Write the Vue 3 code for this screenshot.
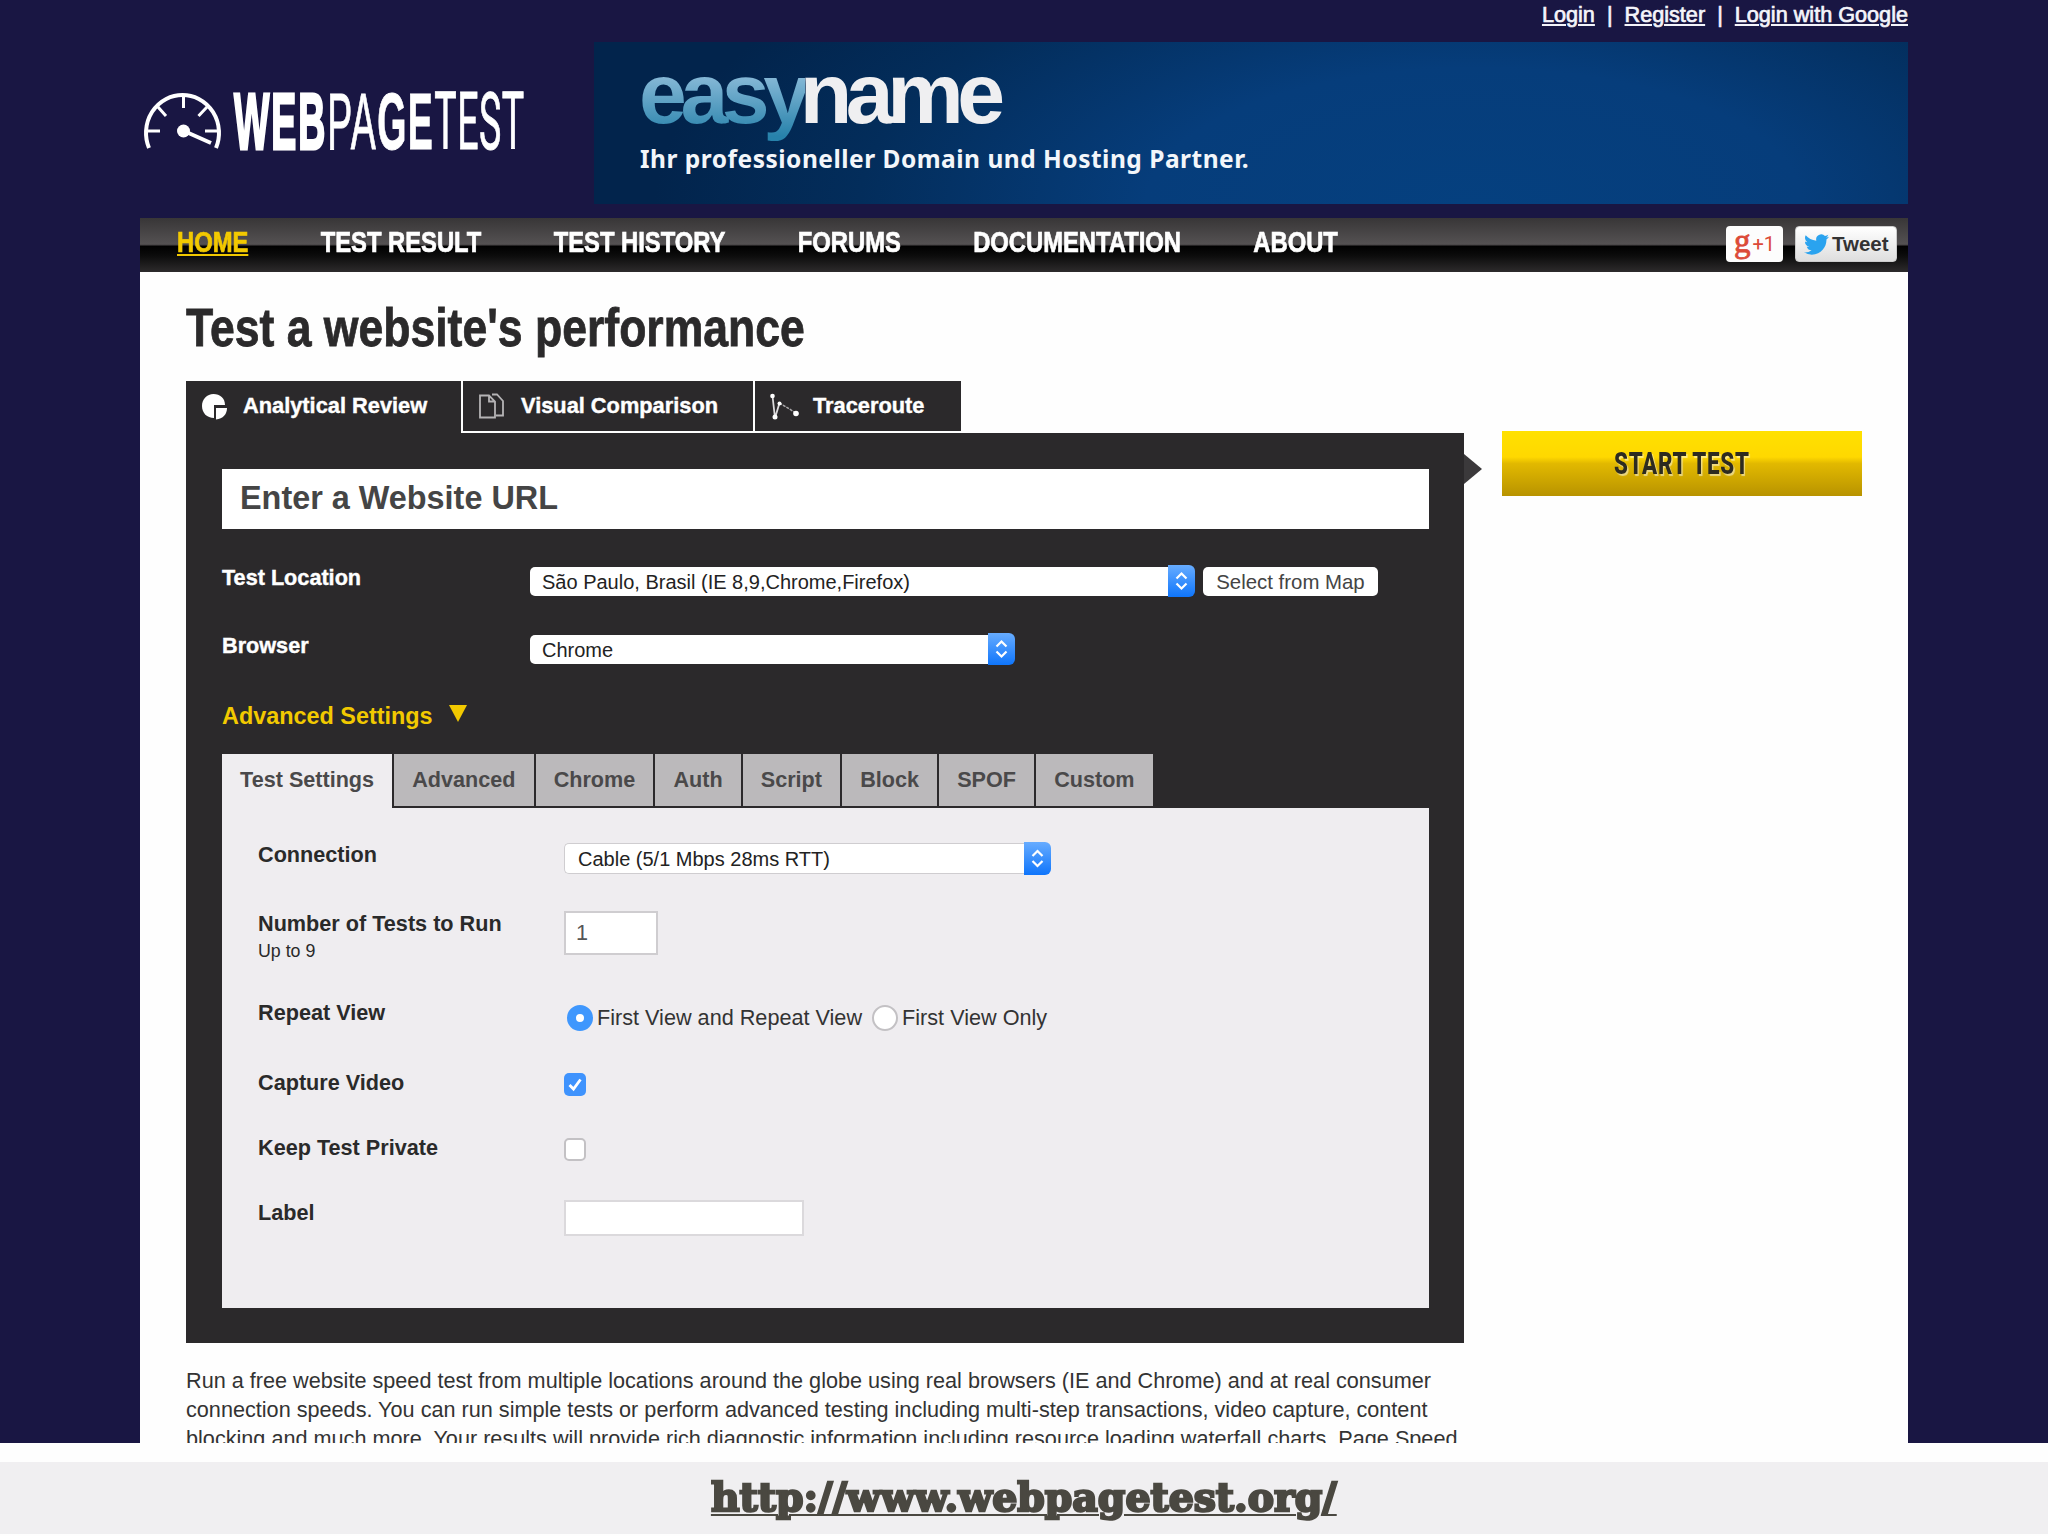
<script setup>
import { ref } from "vue";

const navItems = ["HOME", "TEST RESULT", "TEST HISTORY", "FORUMS", "DOCUMENTATION", "ABOUT"];
const settingsTabs = ["Test Settings", "Advanced", "Chrome", "Auth", "Script", "Block", "SPOF", "Custom"];
const currentNav = ref("HOME");
const currentTab = ref("Test Settings");
</script>

<template>
    <div class="page">
        <svg class="sprite" width="0" height="0">
            <symbol id="chevrons" viewBox="0 0 27 32">
                <path d="M8.5 13.5 L13.5 8.5 L18.5 13.5 M8.5 18.5 L13.5 23.5 L18.5 18.5" fill="none" stroke="#fff" stroke-width="2.2" />
            </symbol>
        </svg>

        <div class="site">
            <div class="user-links">
                <a>Login</a><span>|</span><a>Register</a><span>|</span><a>Login with Google</a>
            </div>

            <div class="header">
                <div class="logo">
                    <svg width="94" height="162" viewBox="140 42 94 162">
                        <g fill="none" stroke="#fff" stroke-width="4">
                            <path d="M149 148 A36.5 38 0 1 1 216 148" />
                            <path d="M183.500 95 V108 M158 107 L166 116 M207 107 L198.500 116 M147 131 H160 M205 131 H218" stroke-width="3" />
                            <path d="M184 131 L211 143" />
                        </g>
                        <circle cx="183.500" cy="131" r="6.500" fill="#fff" />
                    </svg>
                    <div class="logo-text"><b class="web">WEB</b><span>PA</span><b>GE</b><span class="thin">TEST</span></div>
                </div>
                <div class="banner">
                    <div class="brand"><span class="easy">easy</span><span class="name">name</span></div>
                    <p class="tagline">Ihr professioneller Domain und Hosting Partner.</p>
                </div>
            </div>

            <div class="nav">
                <ul>
                    <li v-for="item in navItems" :key="item" :class="{ current: item === currentNav }" @click="currentNav = item">{{ item }}</li>
                </ul>
                <div class="social">
                    <div class="plus-one"><span class="g">g</span><span>+1</span></div>
                    <div class="tweet">
                        <svg width="25" height="25" viewBox="0 0 24 24">
                            <path fill="#2aa3ef" d="M23.953 4.57a10 10 0 01-2.825.775 4.958 4.958 0 002.163-2.723c-.951.555-2.005.959-3.127 1.184a4.92 4.92 0 00-8.384 4.482C7.69 8.095 4.067 6.13 1.64 3.162a4.822 4.822 0 00-.666 2.475c0 1.71.87 3.213 2.188 4.096a4.904 4.904 0 01-2.228-.616v.06a4.923 4.923 0 003.946 4.827 4.996 4.996 0 01-2.212.085 4.936 4.936 0 004.604 3.417 9.867 9.867 0 01-6.102 2.105c-.39 0-.779-.023-1.17-.067a13.995 13.995 0 007.557 2.209c9.053 0 13.998-7.496 13.998-13.985 0-.21 0-.42-.015-.63A9.935 9.935 0 0024 4.59z" />
                        </svg>
                        <span>Tweet</span>
                    </div>
                </div>
            </div>

            <div class="content">
                <h1>Test a website's performance</h1>
                <div class="columns">
                    <div class="left">
                        <div class="test-tabs">
                            <div class="test-tab active">
                                <svg width="28" height="28" viewBox="0 0 28 28">
                                    <path d="M13 14 V25 C6 25 1 20 1 13 C1 6 6 1 12.500 1 C19 1 24 5 24 12 L13 12 Z" fill="#fff" />
                                    <path d="M15 15 H26 C26 21 22 26 15 26.500 Z" fill="#fff" />
                                </svg>
                                <span>Analytical Review</span>
                            </div>
                            <div class="test-tab compare">
                                <svg width="28" height="28" viewBox="0 0 28 28" fill="none" stroke="#b5b3b5" stroke-width="1.8">
                                    <path d="M2 2.500 H11 L17 8.500 V24.500 H2 Z M11 2.500 V8.500 H17" />
                                    <path d="M14 1.500 H19 L25 8 V22.500 H18" />
                                </svg>
                                <span>Visual Comparison</span>
                            </div>
                            <div class="test-tab trace">
                                <svg width="30" height="28" viewBox="0 0 30 28">
                                    <path d="M2.500 3 L5 25 L9.500 10" fill="none" stroke="#dddbdd" stroke-width="1.8" />
                                    <path d="M9.500 10 L26 20" fill="none" stroke="#aaa8aa" stroke-width="1.500" stroke-dasharray="3 1" />
                                    <g fill="#fff">
                                        <circle cx="2.500" cy="3" r="2.300" />
                                        <circle cx="5" cy="24" r="2.500" />
                                        <circle cx="9.500" cy="10.500" r="2" />
                                        <circle cx="26" cy="20.500" r="2.800" />
                                    </g>
                                </svg>
                                <span>Traceroute</span>
                            </div>
                        </div>

                        <div class="panel">
                            <div class="arrow"></div>
                            <div class="url">Enter a Website URL</div>
                            <div class="field">
                                <label>Test Location</label>
                                <div class="select location">
                                    <span>São Paulo, Brasil (IE 8,9,Chrome,Firefox)</span>
                                    <svg><use href="#chevrons" /></svg>
                                </div>
                                <div class="map-button">Select from Map</div>
                            </div>
                            <div class="field">
                                <label>Browser</label>
                                <div class="select browser">
                                    <span>Chrome</span>
                                    <svg><use href="#chevrons" /></svg>
                                </div>
                            </div>
                            <div class="advanced">Advanced Settings<i></i></div>

                            <div class="settings-tabs">
                                <div v-for="tab in settingsTabs" :key="tab" class="settings-tab" :class="{ active: tab === currentTab }" @click="currentTab = tab">{{ tab }}</div>
                            </div>
                            <div class="settings">
                                <label>Connection</label>
                                <div class="select connection">
                                    <span>Cable (5/1 Mbps 28ms RTT)</span>
                                    <svg><use href="#chevrons" /></svg>
                                </div>
                                <label>Number of Tests to Run<small>Up to 9</small></label>
                                <div class="input runs">1</div>
                                <label>Repeat View</label>
                                <div class="radios">
                                    <span class="radio checked"></span><span>First View and Repeat View</span>
                                    <span class="radio second"></span><span>First View Only</span>
                                </div>
                                <label>Capture Video</label>
                                <div class="checkbox checked">
                                    <svg width="22" height="23" viewBox="0 0 22 23">
                                        <path d="M5.500 12 L9.500 16 L16.500 6.500" fill="none" stroke="#fff" stroke-width="2.800" />
                                    </svg>
                                </div>
                                <label>Keep Test Private</label>
                                <div class="checkbox"></div>
                                <label>Label</label>
                                <div class="input label-input"></div>
                            </div>
                        </div>

                        <p class="intro">
                            Run a free website speed test from multiple locations around the globe using real browsers (IE and Chrome) and at real consumer<br />
                            connection speeds. You can run simple tests or perform advanced testing including multi-step transactions, video capture, content<br />
                            blocking and much more. Your results will provide rich diagnostic information including resource loading waterfall charts, Page Speed
                        </p>
                    </div>
                    <div class="start"><span>START TEST</span></div>
                </div>
            </div>
        </div>

        <div class="footer">
            <a>http://www.webpagetest.org/</a>
        </div>
    </div>
</template>

<style>
body {
    margin: 0;
    background: #fefefe;
}
</style>

<style scoped>
.page {
    width: 2048px;
    height: 1536px;
    overflow: hidden;
    background: #fefefe;
    font-family: "Liberation Sans", Arial, sans-serif;
    font-size: 21.65px;
    color: #333;
}

.page * {
    box-sizing: border-box;
}

.sprite {
    display: block;
}

.site {
    height: 1443px;
    padding: 0 140px;
    background: #191643;
    overflow: hidden;
}

.user-links {
    display: flex;
    justify-content: flex-end;
    gap: 12px;
    height: 42px;
    line-height: 29px;
    color: #f4f4fa;
    -webkit-text-stroke: 0.7px #f4f4fa;
}

.user-links a {
    text-decoration: underline;
    text-decoration-thickness: 2px;
    text-underline-offset: 2px;
}

.header {
    display: flex;
    height: 176px;
}

.logo {
    display: flex;
    flex: none;
    width: 454px;
}

.logo svg {
    flex: none;
}

.logo-text {
    width: 290px;
    padding-top: 40px;
    line-height: 80px;
    font-size: 80px;
    letter-spacing: 3px;
    color: #fff;
    -webkit-text-stroke: 1px #fff;
    transform: scaleX(0.469);
    transform-origin: 0 0;
    white-space: nowrap;
}

.web {
    letter-spacing: 4px;
    -webkit-text-stroke: 3px #fff;
}

.thin {
    font-family: Roboto, "Liberation Sans", sans-serif;
    letter-spacing: 1px;
}

.banner {
    width: 1314px;
    height: 162px;
    padding: 21px 0 0 45px;
    background: radial-gradient(ellipse 820px 340px at 67% 100%, #05407f 0%, #063d7b 40%, #032d5b 75%, #02244c 100%);
}

.brand {
    height: 60px;
    line-height: 60px;
    font-size: 86px;
    font-weight: bold;
    letter-spacing: -6.4px;
    white-space: nowrap;
}

.easy {
    background: linear-gradient(#92bfdc 25%, #2782ab 95%);
    background-clip: text;
    -webkit-background-clip: text;
    color: transparent;
}

.name {
    margin-left: -5px;
    color: #efeff1;
}

.tagline {
    margin: 21px 0 0 1px;
    line-height: 30px;
    font-family: "Noto Sans", sans-serif;
    font-size: 24.5px;
    font-weight: 700;
    letter-spacing: 0.5px;
    color: #f3f6fa;
    white-space: nowrap;
}

.nav {
    display: flex;
    justify-content: space-between;
    height: 54px;
    background: linear-gradient(#383637 0%, #545152 48%, #454243 50%, #000 52%, #0c0c0c 70%, #2d2b2c 100%);
}

/* condensed headings are squeezed from the regular width */
.nav ul {
    display: flex;
    gap: 88.2px;
    margin: 0;
    padding: 0 0 0 37px;
    list-style: none;
    transform: scaleX(0.82);
    transform-origin: 37px 0;
    line-height: 48px;
    font-size: 29px;
    font-weight: bold;
    color: #fff;
    -webkit-text-stroke: 0.7px;
    white-space: nowrap;
}

.nav .current {
    color: #f2c900;
    text-decoration: underline;
    text-decoration-thickness: 2px;
    text-underline-offset: 2px;
}

.social {
    display: flex;
    gap: 12px;
    padding: 8px 11px 0 0;
}

.plus-one,
.tweet {
    display: flex;
    align-items: center;
    height: 36px;
    border-radius: 4px;
    background: #fdfdfd;
}

.plus-one {
    width: 57px;
    justify-content: center;
    color: #dc4a38;
    font-family: Roboto, sans-serif;
    font-size: 20px;
}

.plus-one .g {
    margin: -6px 2px 0 0;
    font-family: "Liberation Serif", serif;
    font-size: 33px;
    -webkit-text-stroke: 0.8px #dc4a38;
}

.tweet {
    width: 102px;
    padding-left: 8px;
    gap: 3px;
    border: 1px solid #ccc;
    background: linear-gradient(#fff, #dedede);
    font-size: 20.5px;
    font-weight: bold;
    color: #333;
}

.tweet svg {
    flex: none;
}

.content {
    height: 1171px;
    padding: 0 46px;
    background: #fefefe;
}

h1 {
    height: 109px;
    margin: 0;
    line-height: 111px;
    font-size: 54px;
    transform: scaleX(0.825);
    transform-origin: 0 0;
    color: #2b2a2b;
    -webkit-text-stroke: 0.8px #2b2a2b;
    white-space: nowrap;
}

.columns {
    display: flex;
    justify-content: space-between;
    align-items: flex-start;
}

.left {
    width: 1278px;
}

.test-tabs {
    display: flex;
    height: 52px;
}

.test-tab {
    display: flex;
    height: 50px;
    padding-left: 15px;
    background: #2b292b;
    color: #fff;
    font-size: 21.8px;
    font-weight: bold;
    line-height: 49px;
    -webkit-text-stroke: 0.4px #fff;
    white-space: nowrap;
}

.test-tab.active {
    width: 275px;
    height: 52px;
}

.test-tab svg {
    flex: none;
    margin-top: 12px;
}

.test-tab span {
    margin-left: 14px;
}

.compare {
    width: 290px;
    margin-left: 2px;
}

.compare span {
    margin-left: 15px;
}

.trace {
    width: 206px;
    margin-left: 2px;
}

.trace span {
    margin-left: 13px;
}

.panel {
    position: relative;
    height: 910px;
    padding: 36px 35px 35px 36px;
    background: #2b292b;
}

.arrow {
    position: absolute;
    top: 21px;
    left: 100%;
    border: solid transparent;
    border-width: 15px 0 15px 18px;
    border-left-color: #3b393b;
}

.url {
    height: 60px;
    padding-left: 18px;
    background: #fff;
    line-height: 58px;
    font-size: 32.4px;
    font-weight: bold;
    color: #454545;
}

.field {
    display: flex;
    height: 32px;
    margin-top: 36px;
}

.field label {
    width: 308px;
    line-height: 26px;
    font-weight: bold;
    color: #fff;
    -webkit-text-stroke: 0.4px #fff;
}

.select {
    display: flex;
    height: 32px;
    font-size: 20px;
    color: #222;
    white-space: nowrap;
}

.select span {
    flex: 1;
    height: 29px;
    margin-top: 2px;
    padding-left: 12px;
    border-radius: 5px 0 0 5px;
    background: #fff;
    line-height: 30px;
}

.select svg {
    width: 27px;
    height: 32px;
    border-radius: 0 6px 6px 0;
    background: linear-gradient(#67acff, #0f75fb);
}

.location {
    width: 665px;
}

.browser {
    width: 485px;
}

.map-button {
    width: 175px;
    height: 29px;
    margin: 2px 0 0 8px;
    border-radius: 5px;
    background: #fff;
    line-height: 30px;
    text-align: center;
    font-size: 20.4px;
    color: #444;
}

.advanced {
    display: flex;
    margin-top: 35px;
    line-height: 32px;
    height: 30px;
    font-size: 23.4px;
    font-weight: bold;
    color: #f2c900;
}

.advanced i {
    height: 0;
    margin: 5px 0 0 16px;
    border: solid transparent;
    border-width: 17px 9px 0;
    border-top-color: #f2c900;
}

.settings-tabs {
    display: flex;
    height: 54px;
    margin-top: 24px;
}

.settings-tab {
    height: 52px;
    padding: 0 18.1px;
    margin-left: 2px;
    background: #bbb9bb;
    line-height: 51px;
    font-size: 21.6px;
    font-weight: bold;
    color: #4a494a;
}

.settings-tab.active {
    height: 54px;
    margin-left: 0;
    background: #efedf0;
}

.settings {
    display: grid;
    grid-template-columns: 306px 1fr;
    grid-template-rows: 69px 89px 70px 65px 65px;
    align-items: start;
    height: 500px;
    padding: 34px 0 0 36px;
    background: #efedf0;
}

.settings label {
    line-height: 26px;
    font-weight: bold;
    color: #2a2a2a;
}

.settings small {
    display: block;
    line-height: 28px;
    font-size: 17.8px;
    font-weight: normal;
}

.connection {
    width: 487px;
    height: 33px;
}

.connection span {
    height: 31px;
    margin-top: 1px;
    border: 1px solid #cfcdd0;
    border-right: 0;
    padding-left: 13px;
    line-height: 30px;
}

.connection svg {
    height: 33px;
}

.input {
    background: #fff;
    border: 2px solid #cfcdd0;
}

.runs {
    width: 94px;
    height: 44px;
    padding-left: 10px;
    line-height: 39px;
    color: #555;
}

.radios {
    display: flex;
    align-items: center;
    margin: 5px 0 0 3px;
    height: 26px;
    color: #333;
}

.radio {
    width: 26px;
    height: 26px;
    margin-right: 4px;
    border: 2px solid #c3c1c4;
    border-radius: 50%;
    background: #fff;
}

.radio.second {
    margin-left: 10px;
}

.radio.checked {
    border: 9px solid #3f97fd;
}

.checkbox {
    width: 22px;
    height: 23px;
    margin-top: 3px;
    border: 2px solid #c3c1c4;
    border-radius: 5px;
    background: #fff;
}

.checkbox.checked {
    border: 0;
    background: #3f93fd;
}

.checkbox svg {
    display: block;
}

.label-input {
    width: 240px;
    height: 36px;
    border-color: #dbd9dc;
}

.intro {
    margin: 23px 0 0;
    line-height: 29px;
    white-space: nowrap;
}

.start {
    width: 360px;
    height: 65px;
    margin-top: 50px;
    background: linear-gradient(#ffe100 0%, #ffd800 40%, #e2b900 50%, #b89300 100%);
    line-height: 64px;
    text-align: center;
    font-family: Roboto, sans-serif;
    font-size: 32px;
    font-weight: 800;
    color: #2d2b20;
    text-shadow: 2px 2px 1px rgba(255, 255, 255, 0.5);
}

.start span {
    display: inline-block;
    letter-spacing: 1px;
    transform: scaleX(0.7);
}

.footer {
    height: 72px;
    margin-top: 19px;
    background: #f0eff1;
    line-height: 70px;
    text-align: center;
}

.footer a {
    display: inline-block;
    transform: scaleX(1.01);
    font-family: "DejaVu Serif", serif;
    font-size: 39px;
    font-weight: bold;
    color: #4a4841;
    -webkit-text-stroke: 2.4px #4a4841;
    text-decoration: underline;
    text-decoration-thickness: 2px;
    text-underline-offset: 3px;
    white-space: nowrap;
}
</style>
